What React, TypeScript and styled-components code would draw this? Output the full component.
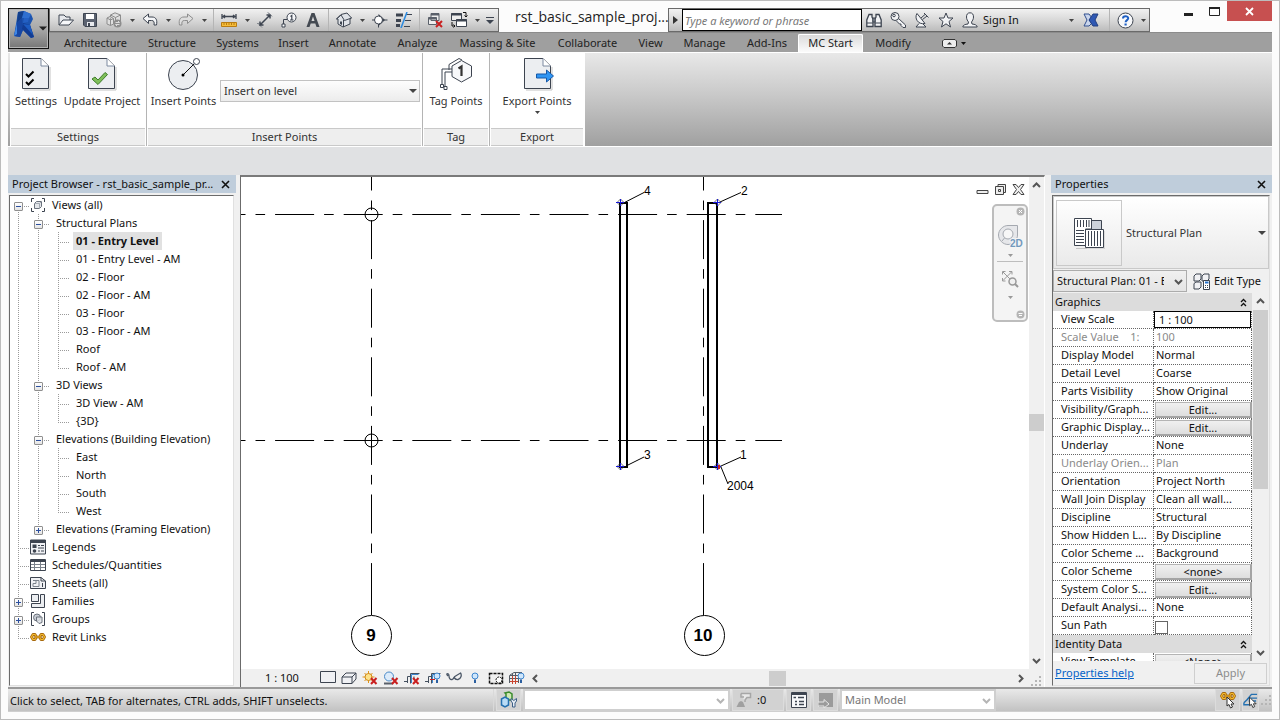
import React from "react";
import styled, { createGlobalStyle, css } from "styled-components";

const UI_FONT = '"Noto Sans", "Open Sans", "Liberation Sans", sans-serif';

const GlobalStyle = createGlobalStyle`
  *, *::before, *::after { box-sizing: border-box; }
  body { margin: 0; background: #fcfcfc; color: #111; font: 11px/18px ${UI_FONT}; }
  button, input, select { font: inherit; color: inherit; margin: 0; padding: 0; border: 0; background: none; border-radius: 0; }
  button { cursor: default; }
  ul { list-style: none; margin: 0; padding: 0; }
`;

/* ---------- shell ---------- */

const Window = styled.div`
  position: relative;
  display: flex;
  flex-direction: column;
  height: 100vh;
  min-height: 480px;
  padding: 0 7px 7px;
  border: 1px solid #bcbcbc;
  background: #fcfcfc;
`;

const TitleBar = styled.header`
  display: flex;
  flex: none;
  height: 31px;
  padding-left: 41px;
`;

const AppButton = styled.button`
  position: absolute;
  left: 7px;
  top: 7px;
  width: 41px;
  height: 41px;
  display: flex;
  align-items: center;
  border: 1px solid #111;
  background: linear-gradient(#c4c4c4, #a9a9a9 50%, #777);
  box-shadow: inset 0 0 0 1px #b5b5b5;
`;

const barSurface = css`
  display: flex;
  align-items: center;
  height: 24px;
  margin-top: 7px;
  border: 1px solid #6a6a6a;
  background: linear-gradient(#f1f1f1, #d6d6d6 55%, #bcbcbc);
`;

const QuickAccess = styled.div`
  ${barSurface}
  flex: none;
  width: 450px;
  padding-left: 4px;
`;

const ToolButton = styled.button<{ $w?: number }>`
  flex: none;
  display: flex;
  align-items: center;
  justify-content: center;
  width: ${(p) => p.$w ?? 24}px;
  height: 22px;
`;

const BarDivider = styled.span`
  flex: none;
  width: 7px;
  height: 22px;
  border-left: 3px solid transparent;
  background: linear-gradient(#b5b5b5, #b5b5b5) 0 0 / 1px 100% no-repeat content-box;
`;

const DocTitle = styled.h1`
  flex: 1;
  min-width: 0;
  margin: 0;
  padding-left: 16px;
  overflow: hidden;
  white-space: nowrap;
  font: 400 14px/32px "Open Sans", "Noto Sans", sans-serif;
  color: #222;
`;

const InfoCenter = styled.div`
  ${barSurface}
  flex: none;
  width: 482px;
`;

const SearchBox = styled.input`
  width: 180px;
  height: 22px;
  padding: 0 2px;
  border: 1px solid #000;
  background: #fff;
  font-style: italic;
  &::placeholder { color: #777; opacity: 1; }
`;

const SignIn = styled.button`
  flex: 1;
  display: flex;
  align-items: center;
  justify-content: space-between;
  height: 22px;
  padding: 0 2px 0 1px;
`;

const WindowButtons = styled.div`
  flex: none;
  display: flex;
  align-items: flex-start;
  width: 122px;
  padding-left: 25px;
`;

const WindowButton = styled.button<{ $close?: boolean }>`
  display: flex;
  align-items: center;
  justify-content: center;
  width: ${(p) => (p.$close ? 45 : 26)}px;
  height: 20px;
  background: ${(p) => (p.$close ? "#c75050" : "none")};
`;

/* ---------- ribbon ---------- */

const TabStrip = styled.nav`
  flex: none;
  display: flex;
  align-items: flex-end;
  height: 20px;
  padding-left: 45px;
  background: #9f9f9f;
  border-top: 1px solid #8c8c8c;
`;

const Tab = styled.button<{ $w: number; $active?: boolean }>`
  flex: none;
  width: ${(p) => p.$w}px;
  height: 18px;
  line-height: 16px;
  text-align: center;
  white-space: nowrap;
  color: #222;
  ${(p) =>
    p.$active &&
    css`
      background: linear-gradient(#d9d9d9, #fbfbfb);
      box-shadow: inset 0 1px #fff, inset 1px 0 #fff, inset -1px 0 #fff;
      border-radius: 2px 2px 0 0;
    `}
`;

const TabExtras = styled.button`
  display: flex;
  align-items: center;
  gap: 4px;
  height: 18px;
  margin-left: 19px;
`;

const Ribbon = styled.section`
  flex: none;
  display: flex;
  height: 94px;
  padding-left: 2px;
  border-top: 1px solid #fff;
  background: linear-gradient(#e8e8e8, #c9c9c9 45%, #a0a0a0);
`;

const RibbonPanel = styled.section<{ $w: number }>`
  flex: none;
  display: flex;
  flex-direction: column;
  width: ${(p) => p.$w}px;
  border-right: 1px solid #b4b4b4;
  box-shadow: inset 1px 0 #fff, inset -1px 0 #fff;
  background: #fff;
  &:last-child { border-right-color: transparent; }
`;

const PanelBody = styled.div`
  flex: 1;
  display: flex;
  justify-content: center;
  align-items: flex-start;
  gap: 2px;
  padding-top: 4px;
  white-space: nowrap;
`;

const PanelTitle = styled.h2`
  margin: 0 1px;
  height: 18px;
  border-top: 1px solid #c9c9c9;
  border-bottom: 1px solid #c9c9c9;
  background: #eee;
  font-size: 11px;
  font-weight: 400;
  line-height: 16px;
  text-align: center;
  color: #333;
`;

const BigButton = styled.button<{ $w: number }>`
  display: flex;
  flex-direction: column;
  align-items: center;
  width: ${(p) => p.$w}px;
  color: #333;
  line-height: 18px;
  & > svg:last-child:not(:first-child) { margin-top: 1px; }
`;

const LevelPicker = styled.label`
  position: relative;
  width: 200px;
  height: 22px;
  margin-top: 23px;
  display: flex;
  align-items: center;
  border: 1px solid #c2c2c2;
  background: linear-gradient(#fdfdfd, #ececec);
  select { appearance: none; width: 100%; height: 20px; padding-left: 3px; color: #333; }
  svg { position: absolute; right: 2px; pointer-events: none; }
`;

const OptionsBar = styled.div`
  flex: none;
  height: 29px;
  border-top: 1px solid #fff;
  background: #e0e1e3;
`;

/* ---------- workspace ---------- */

const Workspace = styled.main`
  flex: 1;
  display: flex;
  gap: 4px;
  min-height: 0;
  background: #f0f0f0;
`;

const Dock = styled.aside<{ $w: number }>`
  flex: none;
  display: flex;
  flex-direction: column;
  width: ${(p) => p.$w}px;
  min-height: 0;
`;

const DockTitle = styled.header`
  flex: none;
  display: flex;
  justify-content: space-between;
  align-items: center;
  height: 18px;
  padding: 0 6px 0 4px;
  background: #bfcddb;
  white-space: nowrap;
  h2 { margin: 0; font-size: 11px; font-weight: 400; line-height: 18px; }
  button { display: flex; }
`;

const TreeBox = styled.div`
  flex: 1;
  min-height: 0;
  margin: 2px 2px 1px 1px;
  overflow: hidden;
  border: 1px solid #e0e0e0;
  border-top-color: #6b6b6b;
  border-left-color: #6b6b6b;
  background: #fff;
`;

const TreeRow = styled.li`
  display: flex;
  align-items: center;
  height: 18px;
  white-space: nowrap;
  & > svg { margin-right: 3px; }
`;

const vDots = "repeating-linear-gradient(to bottom, #9a9a9a 0 1px, transparent 1px 2px)";
const hDots = "repeating-linear-gradient(to right, #9a9a9a 0 1px, transparent 1px 2px)";

const guideFill = {
  line: `${vDots} 8px 0 / 1px 100% no-repeat`,
  tee: `${vDots} 8px 0 / 1px 100% no-repeat, ${hDots} 8px 10px / 14px 1px no-repeat`,
  end: `${vDots} 8px 0 / 1px 11px no-repeat, ${hDots} 8px 10px / 14px 1px no-repeat`,
  start: `${vDots} 8px 10px / 1px 8px no-repeat, ${hDots} 8px 10px / 14px 1px no-repeat`,
};

const Guide = styled.span<{ $kind: keyof typeof guideFill }>`
  flex: none;
  display: flex;
  width: 20px;
  height: 18px;
  padding: 6px 0 0 4px;
  background: ${(p) => guideFill[p.$kind]};
`;

const Expander = styled.button`
  display: flex;
  width: 9px;
  height: 9px;
  border: 1px solid #8f8f8f;
  border-radius: 1px;
  background: linear-gradient(#fff, #e4e4e4);
`;

const TreeLabel = styled.span<{ $selected?: boolean; $indent?: boolean }>`
  padding: 0 3px;
  margin-left: ${(p) => (p.$indent ? 3 : 0)}px;
  font-weight: ${(p) => (p.$selected ? 700 : 400)};
  background: ${(p) => (p.$selected ? "#e1e1e1" : "none")};
`;

/* ---------- canvas ---------- */

const CanvasFrame = styled.section`
  flex: 1;
  display: grid;
  grid-template-columns: minmax(0, 1fr) 15px;
  grid-template-rows: minmax(0, 1fr) 18px;
  min-width: 0;
  margin-right: 2px;
  border-top: 2px solid #7a7a7a;
  border-left: 1px solid #6b6b6b;
  border-right: 1px solid #fff;
`;

const Sheet = styled.div`
  position: relative;
  overflow: hidden;
  background: #fff;
  & > svg { display: block; width: 100%; height: 100%; }
`;

const ViewButtons = styled.div`
  position: absolute;
  top: 6px;
  right: 4px;
  display: flex;
  gap: 5px;
  button { display: flex; }
`;

const NavBar = styled.div`
  position: absolute;
  top: 27px;
  right: 1px;
  display: flex;
  flex-direction: column;
  align-items: center;
  width: 36px;
  height: 118px;
  border: 2px solid #bdbdbd;
  border-radius: 5px;
  background: #f4f4f4;
  button { display: flex; }
  hr { width: 26px; margin: 4px 0 8px; border: 0; border-top: 1px solid #bdbdbd; }
`;

const NavCorner = styled.button`
  align-self: flex-end;
  margin: 1px 1px 4px;
  &:last-child { margin: auto 1px 1px; }
`;

const NavTool = styled.button<{ $gap: number }>`
  flex: none;
  flex-direction: column;
  align-items: center;
  gap: ${(p) => p.$gap}px;
`;

const VScroll = styled.div`
  display: flex;
  flex-direction: column;
  align-items: center;
  background: #f0f0f0;
`;

const ScrollButton = styled.button`
  flex: none;
  display: flex;
  align-items: center;
  justify-content: center;
  width: 17px;
  height: 17px;
`;

const Thumb = styled.div<{ $w: number; $h: number }>`
  width: ${(p) => p.$w}px;
  height: ${(p) => p.$h}px;
  background: #cdcdcd;
`;

const Track = styled.div<{ $grow: number }>`
  flex: ${(p) => p.$grow};
`;

const ViewControls = styled.div`
  display: flex;
  align-items: center;
  background: #f0f0f0;
`;

const ScaleButton = styled.button`
  flex: none;
  width: 76px;
  padding-left: 24px;
  text-align: left;
  line-height: 16px;
`;

const ControlButton = styled.button`
  flex: none;
  display: flex;
  justify-content: center;
  width: 21px;
`;

/* ---------- properties ---------- */

const PropsBox = styled.div`
  flex: 1;
  display: flex;
  flex-direction: column;
  min-height: 0;
  margin: 2px 2px 1px 1px;
  border: 1px solid #e0e0e0;
  border-top-color: #6b6b6b;
  border-left-color: #6b6b6b;
`;

const TypeSelector = styled.button`
  flex: none;
  display: flex;
  align-items: center;
  height: 73px;
  padding: 0 2px;
  border: 1px solid #c9c9c9;
  background: linear-gradient(#fff, #e9e9e9);
  color: #333;
  text-align: left;
  span { flex: 1; padding-left: 4px; }
`;

const TypePreview = styled.i`
  display: flex;
  align-items: center;
  justify-content: center;
  width: 66px;
  height: 66px;
  border: 1px solid #c9c9c9;
`;

const FilterRow = styled.div`
  flex: none;
  display: flex;
  align-items: center;
  height: 24px;
`;

const Select = styled.label<{ $w: number; $disabled?: boolean }>`
  position: relative;
  display: flex;
  align-items: center;
  flex: none;
  width: ${(p) => p.$w}px;
  height: 22px;
  border: ${(p) => (p.$disabled ? "2px solid #cfcfcf" : "1px solid #acacac")};
  background: ${(p) => (p.$disabled ? "#fff" : "linear-gradient(#f0f0f0, #e4e4e4)")};
  color: ${(p) => (p.$disabled ? "#777" : "#111")};
  select { appearance: none; width: 100%; height: 18px; padding: 0 22px 0 3px; opacity: 1; color: inherit; }
  svg { position: absolute; right: 3px; pointer-events: none; }
`;

const EditType = styled.button`
  flex: 1;
  display: flex;
  align-items: center;
  gap: 4px;
  padding-left: 6px;
  white-space: nowrap;
  line-height: 16px;
`;

const GridArea = styled.div`
  flex: 1;
  display: flex;
  min-height: 0;
`;

const GridClip = styled.div`
  flex: 1;
  min-width: 0;
  overflow: hidden;
  background: #fff;
`;

const PropTable = styled.table`
  width: 100%;
  table-layout: fixed;
  border-collapse: separate;
  border-spacing: 0;
`;

const GroupCell = styled.th`
  height: 18px;
  padding: 0 5px 0 2px;
  background: #dcdcdc;
  font-weight: 400;
  text-align: left;
  line-height: 18px;
  div { display: flex; justify-content: space-between; align-items: center; }
`;

const NameCell = styled.th<{ $dim?: boolean }>`
  height: 18px;
  padding: 0 0 1px 8px;
  border-right: 1px dotted #666;
  border-bottom: 1px dotted #666;
  font-weight: 400;
  text-align: left;
  white-space: pre;
  line-height: 16px;
  overflow: hidden;
  color: ${(p) => (p.$dim ? "#8a8a8a" : "#111")};
`;

const ValueCell = styled.td<{ $dim?: boolean; $flush?: boolean }>`
  height: 18px;
  padding: ${(p) => (p.$flush ? "0" : "0 0 1px 2px")};
  border-right: 1px dotted #666;
  border-bottom: 1px dotted #666;
  white-space: nowrap;
  line-height: 16px;
  color: ${(p) => (p.$dim ? "#8a8a8a" : "#111")};
`;

const ScaleInput = styled.input`
  display: block;
  width: 100%;
  height: 17px;
  padding: 0 0 1px 4px;
  border: 1px solid #000;
`;

const CellButton = styled.button`
  display: block;
  width: 97px;
  height: 16px;
  margin-left: 1px;
  border: 1px solid #b4b4b4;
  border-bottom: 2px solid #a4a4a4;
  border-right: 2px solid #a4a4a4;
  background: linear-gradient(#f0f0f0, #dedede);
  line-height: 14px;
`;

const Tick = styled.input`
  appearance: none;
  display: block;
  width: 13px;
  height: 13px;
  margin: 3px 0 0 1px;
  border: 1px solid #666;
  background: #fff;
`;

const HelpRow = styled.footer`
  flex: none;
  display: flex;
  justify-content: space-between;
  align-items: center;
  height: 24px;
  padding: 0 2px;
  a { color: #0563c8; }
`;

const ApplyButton = styled.button`
  width: 73px;
  height: 21px;
  border: 1px solid #cfcfcf;
  color: #8c8c8c;
`;

/* ---------- status bar ---------- */

const StatusBar = styled.footer`
  flex: none;
  display: flex;
  align-items: center;
  gap: 2px;
  height: 25px;
  border-top: 2px solid #9a9a9a;
  border-bottom: 1px solid #cfcfcf;
  background: linear-gradient(#e9e9e9, #c2c2c2);
`;

const StatusText = styled.span`
  flex: none;
  width: 486px;
  height: 22px;
  padding-left: 2px;
  border-right: 1px solid #d9d9d9;
  line-height: 24px;
  white-space: nowrap;
`;

const StatusButton = styled.button<{ $w?: number; $start?: boolean }>`
  flex: none;
  display: flex;
  align-items: center;
  justify-content: ${(p) => (p.$start ? "flex-start" : "center")};
  gap: 5px;
  width: ${(p) => p.$w ?? 25}px;
  height: 22px;
  padding-left: ${(p) => (p.$start ? 3 : 0)}px;
  border: 1px solid #dcdcdc;
  background: #d2d2d2;
`;

const StatusSpacer = styled.span`
  flex: 1;
`;

/* ---------- small drawings ---------- */

const Svg = ({ w = 16, h = 16, children }: { w?: number; h?: number; children: React.ReactNode }) => (
  <svg width={w} height={h} viewBox={`0 0 ${w} ${h}`} fill="none" aria-hidden="true">
    {children}
  </svg>
);

const Caret = ({ w = 5, h = 3, color = "#444" }: { w?: number; h?: number; color?: string }) => (
  <Svg w={w} h={h}>
    <path d={`M0 0H${w}L${w / 2} ${h}Z`} fill={color} />
  </Svg>
);

const Chevron = ({ dir, color = "#555" }: { dir: "up" | "down" | "left" | "right"; color?: string }) => {
  const turn = { up: 0, right: 90, down: 180, left: 270 }[dir];
  return (
    <Svg w={9} h={9}>
      <path d="M1 6 4.500 2.500 8 6" stroke={color} strokeWidth="2" transform={`rotate(${turn} 4.500 4.500)`} />
    </Svg>
  );
};

const Cross = () => (
  <Svg w={9} h={9}>
    <path d="M1 1 8 8M8 1 1 8" stroke="#111" strokeWidth="1.600" />
  </Svg>
);

const ink = "#3d4450";

const RevitLogo = () => (
  <Svg w={39} h={39}>
    <path d="M9 3 15 2 22 5 24 10 21 16 25 28 22 29 14 21 11 28 5 27Z" fill="#1c54b0" />
    <path d="M9 3 15 2 13 9 8 14Z" fill="#123f8c" />
    <path d="M15 2 22 5 20 9 13 9Z" fill="#2f6fd0" />
    <path d="M8 14 13 9 14 21 11 28 5 27Z" fill="#1747a4" />
    <path d="M8 14 5 27 8 25Z" fill="#3f86e6" />
    <path d="M14 14 21 16 25 28 22 29 13 20Z" fill="#123c93" />
    <path d="M14 15 21 16 24 26Z" fill="#1d5cc2" />
    <path d="M15 9 20 9 19 13 14 14Z" fill="#2460c4" />
    <path d="M30 17.500H38L34 21.500Z" fill="#222" />
  </Svg>
);

const OpenIcon = () => (
  <Svg>
    <path d="M1 13V3H6L8 5H12V8" stroke={ink} fill="#e6e8ec" />
    <path d="M1 13 5 8H15.500L11 13Z" stroke={ink} fill="#f7f8fa" />
  </Svg>
);
const SaveIcon = () => (
  <Svg>
    <path d="M1.500 1.500H14.500V14.500H3L1.500 13Z" fill="#5b6270" stroke={ink} />
    <path d="M4 2H12V7H4Z" fill="#fff" />
    <path d="M5 10H12V14H5Z" fill="#e8eaee" />
    <path d="M6 11H8V14H6Z" fill={ink} />
  </Svg>
);
const SyncIcon = () => (
  <Svg>
    <path d="M4.500 3 9 .8 14.500 3V9L9 12 4.500 9ZM4.500 3 9.500 5.500 14.500 3M9.500 5.500V12" stroke="#8d8d8d" fill="#dedede" />
    <path d="M1 6 4 4.500 7.500 6.500V12L4.500 13.500 1 12ZM1 6 4.500 8 7.500 6.500M4.500 8V13.500" stroke="#8d8d8d" fill="#dedede" />
    <circle cx="11.500" cy="11.500" r="4" fill="#8d8d8d" />
    <path d="M9.500 10.500H13.500L12 9M13.500 12.500H9.500L11 14" stroke="#dcdcdc" />
  </Svg>
);
const UndoIcon = () => (
  <Svg>
    <path d="M1 6.500 6.500 2V5H10C14 5 15.500 8 14.500 13H12C12.500 10 12 8.500 9.500 8.500H6.500V11.500Z" stroke={ink} fill="#f5f6f8" />
  </Svg>
);
const RedoIcon = () => (
  <Svg>
    <path d="M15 6.500 9.500 2V5H6C2 5 .5 8 1.500 13H4C3.500 10 4 8.500 6.500 8.500H9.500V11.500Z" stroke="#8d8d8d" fill="#dedede" />
  </Svg>
);
const MeasureIcon = () => (
  <Svg>
    <path d="M1 2V7M15 2V7M2 4.500H14M4 3 2 4.500 4 6M12 3 14 4.500 12 6" stroke={ink} strokeWidth="1.300" />
    <path d="M.5 10.500H15.500V14.500H.5Z" fill="#f6bd3a" stroke="#b97c12" />
    <path d="M3 11V13M5.500 11V13M8 11V13M10.500 11V13M13 11V13" stroke="#b97c12" />
  </Svg>
);
const DimensionIcon = () => (
  <Svg>
    <path d="M3 13 13 3M3 9.500V13H6.500M9.500 3H13V6.500" stroke={ink} strokeWidth="1.500" />
    <path d="M.5 11 5 15.500M11 .5 15.500 5" stroke={ink} strokeDasharray="2 1" />
  </Svg>
);
const TagIcon = () => (
  <Svg>
    <circle cx="10.500" cy="5.500" r="4.500" stroke={ink} fill="#f5f6f8" />
    <path d="M9.500 4.500 10.800 3.500V8M9 8H12.500" stroke={ink} strokeWidth="1.200" />
    <path d="M6 7.500H2.500V12" stroke={ink} />
    <path d="M1 12H4V15H1Z" stroke={ink} fill="#fff" />
  </Svg>
);
const TextIcon = () => (
  <Svg>
    <path d="M1.500 15 6.500 1H9.500L14.500 15H11.500L10.300 11.500H5.700L4.500 15ZM6.500 9H9.500L8 4.500Z" fill="#444a52" fillRule="evenodd" />
  </Svg>
);
const HouseIcon = () => (
  <Svg>
    <path d="M.5 7 5 2.500 11 1 15.500 6 14 7V12L7 15 2 12V7Z" stroke={ink} fill="#dfe2e7" />
    <path d="M.5 7 5 3 8.500 8.500 15.500 6M7.500 8V15" stroke={ink} />
    <path d="M4 9.500H6V13L4 12Z" fill={ink} />
  </Svg>
);
const SectionIcon = () => (
  <Svg>
    <path d="M6.500 2 13 8 6.500 14Z" fill={ink} />
    <circle cx="6.500" cy="8" r="4" stroke={ink} fill="#fff" />
    <path d="M12 8H15.500M0 8H2.500M6.500 12V15.500" stroke={ink} />
  </Svg>
);
const ThinLinesIcon = () => (
  <Svg w={18}>
    <path d="M1 3H8M1 8.500H6M1 13.500H5" stroke={ink} strokeWidth="3" />
    <path d="M11 2.500H17M10 8.500H16M9 14.500H15" stroke={ink} />
    <path d="M12 0 6 16" stroke="#2b8ae0" strokeWidth="1.500" />
  </Svg>
);
const CloseHiddenIcon = () => (
  <Svg>
    <path d="M4 1.500H12V8.500H4ZM1.500 5.500H9.500V12.500H1.500Z" stroke="#5a606a" fill="#eee" />
    <path d="M4 2.500H12M1.500 6.500H9.500" stroke="#5a606a" strokeWidth="2" />
    <path d="M9 9 15 15M15 9 9 15" stroke="#c91f1f" strokeWidth="2" />
  </Svg>
);
const SwitchIcon = () => (
  <Svg w={18} h={18}>
    <path d="M1.500 2.500H11.500V9.500H1.500Z" fill="#eee" stroke={ink} />
    <path d="M6.500 8.500H16.500V15.500H6.500Z" fill="#fff" stroke={ink} />
    <path d="M1 3.500H12M6 9.500H17" stroke={ink} strokeWidth="2" />
    <path d="M13 1.500H16V6M14.500 4.500 16 6 17.500 4.500M2 11V15H5M3.500 13.500 5 15 3.500 16.500" stroke="#111" />
  </Svg>
);
const CustomizeIcon = () => (
  <Svg w={8} h={7}>
    <path d="M0 .5H8" stroke={ink} />
    <path d="M0 3H8L4 7Z" fill={ink} />
  </Svg>
);

const BinocularsIcon = () => (
  <Svg>
    <path d="M3 2.500H6V5L7 7V14.500H.8V8ZM13 2.500H10V5L9 7V14.500H15.200V8Z" fill="#f2f3f5" stroke={ink} strokeWidth="1.300" />
    <path d="M7 6H9V10H7ZM1 11H7M9 11H15" fill="#9ca2ab" stroke={ink} />
  </Svg>
);
const KeyIcon = () => (
  <Svg w={17} h={17}>
    <path d="M8 6 15.500 13V15.500H13L11 13.500 11 12H9.500L6 8.500" fill="#f2f3f5" stroke={ink} />
    <circle cx="5" cy="4.500" r="4" fill="#f2f3f5" stroke={ink} />
    <circle cx="4" cy="3.500" r="1.300" stroke={ink} />
  </Svg>
);
const DishIcon = () => (
  <Svg>
    <path d="M5 11.500 2 15H12L9 12" fill="#f2f3f5" stroke={ink} />
    <path d="M3 1.500C0 6 4 13 11 11.500Z" fill="#f2f3f5" stroke={ink} />
    <path d="M7 6 11 2.500M8.500 7.500 13 4M10 1 14.500 5.500" stroke={ink} />
  </Svg>
);
const StarIcon = () => (
  <Svg>
    <path d="M8 1 10 6H15L11 9.500 12.500 15 8 11.800 3.500 15 5 9.500 1 6H6Z" fill="#f2f3f5" stroke={ink} />
  </Svg>
);
const UserIcon = () => (
  <Svg>
    <path d="M8 .8C5.500 .8 4.500 2.500 4.500 5S5.800 9 6.500 10L6 12C3 12.300 1 13 .8 15H15.200C15 13 13 12.300 10 12L9.500 10C10.200 9 11.500 7.500 11.500 5S10.500 .8 8 .8Z" fill="#f2f3f5" stroke={ink} />
  </Svg>
);
const ExchangeIcon = () => (
  <Svg>
    <path d="M1 2H6L9 6 6 8 9 11 6 14H1L4 8Z" fill="#c9d5ec" stroke="#32508f" />
    <path d="M15 2H10L6 8 10 14H15L12 8Z" fill="#2f58b3" stroke="#233f80" />
  </Svg>
);
const HelpIcon = () => (
  <Svg w={17} h={17}>
    <circle cx="8.500" cy="8.500" r="7.500" fill="#f7f8fa" stroke={ink} />
    <path d="M6 6.500C6 3.500 11.200 3.500 11.200 6.300 11.200 8 8.600 8.300 8.600 10.300" stroke="#1d5fc4" strokeWidth="2" />
    <path d="M7.500 11.500H9.700V13.500H7.500Z" fill="#1d5fc4" />
  </Svg>
);

const page = "M1.500 1.500H20L27.500 9V31.500H1.500Z";
const PageBase = () => (
  <>
    <path d="M3 33H29V10" stroke="#c4c4c4" />
    <path d={page} fill="#eceef1" stroke={ink} />
    <path d="M20 1.500V9H27.500" fill="#fff" stroke="#7c8aa0" />
  </>
);
const SettingsIcon = () => (
  <Svg w={30} h={35}>
    <PageBase />
    <path d="M5 17 7.500 19.500 12.500 14.500M5 25 7.500 27.500 12.500 22.500" stroke="#000" strokeWidth="2" />
  </Svg>
);
const UpdateIcon = () => (
  <Svg w={30} h={35}>
    <PageBase />
    <path d="M5 22 8 20 11 23 18 15.500 20.500 17.500 11 27.500Z" fill="#7fbf5a" stroke="#3f7d2c" />
  </Svg>
);
const InsertIcon = () => (
  <Svg w={34} h={35}>
    <circle cx="16" cy="18" r="14.500" fill="#eceef1" stroke={ink} />
    <circle cx="29.500" cy="4.500" r="3" fill="#fff" stroke={ink} />
    <path d="M16 18 27 7" stroke="#111" />
    <circle cx="16" cy="18" r="1.500" fill="#000" />
  </Svg>
);
const TagPointsIcon = () => (
  <Svg w={34} h={35}>
    <path d="M10 13V7.500L20 1.500 23 3" stroke={ink} />
    <path d="M22.500 3.500 32.500 9V19.500L22.500 25 13 19.500V9Z" fill="#f7f8fa" stroke={ink} />
    <path d="M19.500 11.500 22.500 9.500V19" stroke="#333" strokeWidth="2.200" />
    <path d="M13 12H3V28M13 15H6V30" stroke={ink} />
    <path d="M1.500 27.500H4.500V30.500H1.500ZM5 29.500H8V32.500H5Z" stroke={ink} fill="#fff" />
  </Svg>
);
const ExportIcon = () => (
  <Svg w={34} h={35}>
    <g transform="translate(3 0)">
      <PageBase />
    </g>
    <path d="M16.500 17H26.500V13L33.500 19 26.500 25V21H16.500Z" fill="#2f95f3" stroke="#1558a8" />
  </Svg>
);

const ViewsIcon = () => (
  <Svg>
    <path d="M1.500 5V1.500H4M12 1.500H14.500V5M14.500 11V14.500H12M4 14.500H1.500V11" stroke={ink} />
    <path d="M4.500 6.500 6.500 4.500H11.500V9.500L9.500 11.500H4.500Z" fill="#e3e6ea" stroke="#6b727d" />
    <path d="M4.500 6.500H9.500V11.500M9.500 6.500 11.500 4.500" stroke="#a5abb4" />
  </Svg>
);
const LegendIcon = () => (
  <Svg>
    <path d="M.5 1H15.500V15H.5Z" fill="#f0f1f4" stroke={ink} />
    <path d="M1 2.500H15" stroke={ink} strokeWidth="3" />
    <path d="M2.500 5.500H6.500V9H2.500Z" fill={ink} />
    <circle cx="4.500" cy="12" r="1.800" fill={ink} />
    <path d="M8 6.500H10M11 6.500H14M8 9H14M8 12H10M11 12H14" stroke={ink} />
  </Svg>
);
const ScheduleIcon = () => (
  <Svg>
    <path d="M.5 2.500H15.500V13.500H.5Z" fill="#fff" stroke={ink} />
    <path d="M1 4H15" stroke={ink} strokeWidth="2" />
    <path d="M1 7.500H15M1 10.500H15M4.500 5V13M10.500 5V13" stroke="#7b828c" />
  </Svg>
);
const SheetIcon = () => (
  <Svg>
    <path d="M.5 2.500H11L15.500 6V13.500H.5Z" fill="#f0f1f4" stroke={ink} />
    <path d="M11 2.500V6H15.500M12.500 8V12" stroke={ink} />
    <path d="M3 5.500H9V11.500H3V8.500H6V5.500" stroke="#7b828c" />
  </Svg>
);
const FamilyIcon = () => (
  <Svg>
    <path d="M1.500 1.500H8.500V8.500H1.500ZM10.500 1.500H14.500V14.500H1.500V10.500H10.500Z" fill="#eceef1" stroke={ink} />
  </Svg>
);
const GroupIcon = () => (
  <Svg>
    <path d="M4 1.500H1.500V14.500H4M12 1.500H14.500V14.500H12" stroke={ink} />
    <circle cx="7" cy="6.500" r="3.500" fill="#c8cdd5" stroke="#6b727d" />
    <path d="M6.500 6H12V11.500L9 12.500 6.500 10Z" fill="#dfe2e7" fillOpacity="0.800" stroke="#6b727d" />
  </Svg>
);
const chainRings = "M3 5.500H5L6.500 8 5 10.500H3L1.500 8ZM11 5.500H13L14.500 8 13 10.500H11L9.500 8Z";
const Chain = () => (
  <g strokeLinejoin="round">
    <path d={chainRings} stroke="#a8690c" strokeWidth="2.800" />
    <path d={chainRings} stroke="#f5bc2f" strokeWidth="1.200" />
    <path d="M4.500 8H11.500" stroke="#a8690c" strokeWidth="2.400" />
    <path d="M5 8H11" stroke="#f5bc2f" />
  </g>
);
const LinkIcon = () => (
  <Svg>
    <Chain />
  </Svg>
);

const PlanIcon = () => (
  <Svg w={32} h={32}>
    <path d="M3 31.500H14M14 32H32V14" stroke="#c4c4c4" />
    <path d="M10 3.500H28.500V16H10Z" fill="#cdd2da" stroke={ink} />
    <path d="M1.500 1.500H18.500V12H12.500V28.500H1.500Z" fill="#fff" stroke={ink} />
    <path d="M4.500 3V10M7.500 3V10M10.500 3V10M13.500 3V10M16 3V10" stroke={ink} />
    <path d="M3 13.500H11M3 16.500H11M3 19.500H11M3 22.500H11M3 25.500H11" stroke={ink} />
    <path d="M12.500 12.500H30.500V30.500H12.500Z" fill="#fff" stroke={ink} />
    <path d="M15.500 14V29M18.500 14V29M21.500 14V29M24.500 14V29M27.500 14V29" stroke={ink} />
  </Svg>
);
const EditTypeIcon = () => (
  <Svg w={17} h={17}>
    <path d="M1 3 3 1H8V6L6 8H1ZM9 3 11 1H16V6L14 8H9ZM1 10.500 3 9H8V14L6 16H1Z" fill="#f0f1f4" stroke={ink} />
    <path d="M10.500 7.500H16.500V16.500H10.500Z" fill="#fff" stroke={ink} />
    <path d="M12 9.500H15.500" stroke="#2470c9" strokeWidth="2" />
    <path d="M12 12.500H15.500M12 14.500H15.500" stroke={ink} strokeDasharray="1 1" />
  </Svg>
);
const CollapseIcon = () => (
  <Svg w={7} h={9}>
    <path d="M1 4 3.500 1.500 6 4M1 8 3.500 5.500 6 8" stroke="#111" strokeWidth="1.300" />
  </Svg>
);

const redX = <path d="M9 8 14.500 14M14.500 8 9 14" stroke="#c91f1f" strokeWidth="2" />;
const bulb = (
  <>
    <circle cx="12" cy="6" r="3" fill="#cfe6fb" stroke="#3d86cf" />
    <path d="M11 9.500H13V13H11Z" fill="#2b5fa0" />
  </>
);
const DetailIcon = () => (
  <Svg>
    <path d="M.5 1.500H15.500V12.500H.5Z" fill="#f0f1f4" stroke={ink} />
  </Svg>
);
const StyleIcon = () => (
  <Svg>
    <path d="M1 7 5 3H15V9L11 13.500H1ZM1 7H11V13.500M11 7 15 3" fill="#f0f1f4" stroke={ink} />
  </Svg>
);
const SunIcon = () => (
  <Svg>
    <path d="M6.500 1V13M.5 7H12.500M2.500 3 10.500 11M10.500 3 2.500 11" stroke="#e0941a" />
    <circle cx="6.500" cy="7" r="3.500" fill="#fde28a" stroke="#d08a18" />
    {redX}
  </Svg>
);
const ShadowIcon = () => (
  <Svg>
    <path d="M1 13.500H10" stroke="#5a606a" strokeWidth="2" />
    <circle cx="6" cy="6.500" r="4.500" fill="#dcebfa" stroke="#4a8ac8" />
    {redX}
  </Svg>
);
const cropShape = (
  <>
    <path d="M0 11.500H3M3.500 13V6.500H6.500M6.500 13.500V3.500H15.500" stroke="#44505f" />
    <path d="M7.500 13V4.500H14.500" stroke="#3d86cf" />
    <path d="M10 6.500V9" stroke="#44505f" />
  </>
);
const CropIcon = () => (
  <Svg>
    {cropShape}
    {redX}
  </Svg>
);
const CropRegionIcon = () => (
  <Svg>
    {cropShape}
    <path d="M5 9.500H10" stroke="#c91f1f" />
    {bulb}
  </Svg>
);
const GlassesIcon = () => (
  <Svg>
    <path d="M.5 4C2 3 3 4 3 6S4 10 6 9.500 8 7 8 7M8 7 14.500 3C16 5 15 9 12 9.500S8.500 8 8 7M.5 4 2 6" stroke="#4a5666" strokeWidth="1.300" />
  </Svg>
);
const RevealIcon = () => (
  <Svg>
    <g transform="translate(-4 0)">{bulb}</g>
  </Svg>
);
const TempIcon = () => (
  <Svg>
    <path d="M1.500 3.500H14.500V13.500H1.500Z" stroke="#111" strokeDasharray="3 1" strokeWidth="1.500" />
    <circle cx="11" cy="10" r="3" fill="#fff" stroke="#111" strokeDasharray="2 1" />
  </Svg>
);
const ConstraintIcon = () => (
  <Svg>
    <path d="M1 5 5 2.500H13M.5 13V5.500H9.500V13M1 8.500H9M3.500 3.500V5M6.500 3V5M9 5 13 2.500" stroke="#555c66" />
    <path d="M3.500 6V14M6.500 6V14M1 11.500H9" stroke="#c9452f" />
    {bulb}
  </Svg>
);

const WorksetIcon = () => (
  <Svg w={18} h={18}>
    <path d="M5 2 9 1 12 3V9H6V3Z" fill="#cfe8b5" stroke="#3a8a2b" strokeWidth="1.500" />
    <path d="M1.500 8 5 6 8.500 8V14L5 16 1.500 14Z" fill="#b9dcf6" stroke="#2470b0" strokeWidth="1.500" />
    <path d="M11 7.500V10L12.500 12V16H15V12L16.500 10V7.500L13.800 9.500Z" fill="#e8eef5" stroke="#3c5f86" />
  </Svg>
);
const FilterIcon = () => (
  <Svg>
    <path d="M5 1.500H14.500V5.500H11L9 8V10M5 1.500V5H8" stroke="#a6a6a6" strokeWidth="1.500" fill="#e8e8e8" />
    <path d="M.5 15 3 10 5 9 7 10 9 15Z" fill="#a0a0a0" />
  </Svg>
);
const OptionsIcon = () => (
  <Svg>
    <path d="M.5 .5H15.500V15.500H.5Z" fill="#f7f8fa" stroke={ink} />
    <path d="M1 2H15" stroke={ink} strokeWidth="2" />
    <path d="M2.500 5.500H5M7 5.500H13M4 9.500H6M8 9.500H13M4 12.500H6M8 12.500H13" stroke={ink} strokeWidth="1.500" />
  </Svg>
);
const ExcludeIcon = () => (
  <Svg>
    <path d="M1 1H15V15H1Z" fill="#9b9b9b" />
    <path d="M0 10H6V7.500L11 12 6 16V14H0Z" fill="#9b9b9b" stroke="#e6e6e6" />
  </Svg>
);
const pointer = <path d="M7 5V14L9 12.500 10.500 16 12.500 15 11 12H14Z" fill="#fff" stroke="#333" />;
const SelectLinksIcon = () => (
  <Svg h={17}>
    <g transform="translate(0 -4)">
      <Chain />
    </g>
    {pointer}
  </Svg>
);
const SelectUnderlayIcon = () => (
  <Svg h={17}>
    <path d="M1 11 6 6H15M4 8 9 2H15M1 11 1 13H8M6 9H14" stroke="#2470b0" strokeWidth="1.500" />
    {pointer}
  </Svg>
);
const Grip = () => (
  <Svg w={11} h={11}>
    <path d="M8 0H10V2H8ZM8 4H10V6H8ZM4 4H6V6H4ZM8 8H10V10H8ZM4 8H6V10H4ZM0 8H2V10H0Z" fill="#b5b5b5" />
  </Svg>
);

/* ---------- drawing ---------- */

const Joint = ({ x, y }: { x: number; y: number }) => (
  <g stroke="#1818d8">
    <path d={`M${x - 3} ${y + 0.5}L${x + 0.5} ${y - 3}L${x + 4} ${y + 0.5}L${x + 0.5} ${y + 4}Z`} stroke="#333" strokeWidth="0.700" />
    <path d={`M${x - 4} ${y + 0.5}H${x + 4}M${x + 0.5} ${y - 3}V${y + 4}`} />
  </g>
);

const Drawing = () => (
  <svg role="img" aria-label="Structural plan drawing">
    <g transform="translate(-241 -177)" stroke="#000" fill="none">
      <g strokeDasharray="39 10 9.600 10">
        <path d="M206.500 214.500H782" />
        <path d="M206.500 440.500H782" />
        <path d="M371.500 151.500V590" />
        <path d="M703.500 151.500V590" />
      </g>
      <path d="M371.500 590V615M703.500 590V615" />
      <circle cx="371.500" cy="214.500" r="6.500" />
      <circle cx="371.500" cy="440.500" r="6.500" />
      <circle cx="371.500" cy="635.500" r="20" />
      <circle cx="704.500" cy="635.500" r="20" />
      <path d="M620 203H627V467H620ZM708 203H717V467H708Z" strokeWidth="2" />
      <path d="M624.500 202.500 644 192.500M720 202 741 192.500M626 466 644 457M721 466 741 457M721 467 728 484" />
      <Joint x={620} y={202} />
      <Joint x={717} y={202} />
      <Joint x={620} y={466} />
      <Joint x={717} y={466} />
      <path d="M719 465V469" stroke="#d02020" strokeWidth="2" />
      <g stroke="none" fill="#000" fontFamily='"Liberation Sans", sans-serif' fontSize="12">
        <text x="644" y="195">4</text>
        <text x="741" y="195">2</text>
        <text x="644" y="459">3</text>
        <text x="740" y="459">1</text>
        <text x="727" y="490">2004</text>
        <g fontSize="17" fontWeight="700" textAnchor="middle">
          <text x="371" y="641">9</text>
          <text x="703" y="641">10</text>
        </g>
      </g>
    </g>
  </svg>
);

/* ---------- data ---------- */

const tabs: [string, number][] = [
  ["Architecture", 85], ["Structure", 68], ["Systems", 63], ["Insert", 49], ["Annotate", 69],
  ["Analyze", 61], ["Massing & Site", 99], ["Collaborate", 81], ["View", 45], ["Manage", 63],
  ["Add-Ins", 62], ["MC Start", 65], ["Modify", 60],
];

type G = keyof typeof guideFill;
type TreeItem = { label: string; guides: G[]; open?: boolean; icon?: React.ReactNode; selected?: boolean };

const leaves = (labels: string[], selected?: string): TreeItem[] =>
  labels.map((label, i) => ({
    label,
    guides: ["line", "line", i === labels.length - 1 ? "end" : "tee"],
    selected: label === selected,
  }));

const tree: TreeItem[] = [
  { label: "Views (all)", guides: ["start"], open: true, icon: <ViewsIcon /> },
  { label: "Structural Plans", guides: ["line", "tee"], open: true },
  ...leaves(
    ["01 - Entry Level", "01 - Entry Level - AM", "02 - Floor", "02 - Floor - AM", "03 - Floor", "03 - Floor - AM", "Roof", "Roof - AM"],
    "01 - Entry Level",
  ),
  { label: "3D Views", guides: ["line", "tee"], open: true },
  ...leaves(["3D View - AM", "{3D}"]),
  { label: "Elevations (Building Elevation)", guides: ["line", "tee"], open: true },
  ...leaves(["East", "North", "South", "West"]),
  { label: "Elevations (Framing Elevation)", guides: ["line", "end"], open: false },
  { label: "Legends", guides: ["tee"], icon: <LegendIcon /> },
  { label: "Schedules/Quantities", guides: ["tee"], icon: <ScheduleIcon /> },
  { label: "Sheets (all)", guides: ["tee"], icon: <SheetIcon /> },
  { label: "Families", guides: ["tee"], open: false, icon: <FamilyIcon /> },
  { label: "Groups", guides: ["tee"], open: false, icon: <GroupIcon /> },
  { label: "Revit Links", guides: ["end"], icon: <LinkIcon /> },
];

type Prop = { name: string; value: string; kind?: "input" | "button" | "check" | "dim" };
const graphics: Prop[] = [
  { name: "View Scale", value: "1 : 100", kind: "input" },
  { name: "Scale Value    1:", value: "100", kind: "dim" },
  { name: "Display Model", value: "Normal" },
  { name: "Detail Level", value: "Coarse" },
  { name: "Parts Visibility", value: "Show Original" },
  { name: "Visibility/Graph...", value: "Edit...", kind: "button" },
  { name: "Graphic Display...", value: "Edit...", kind: "button" },
  { name: "Underlay", value: "None" },
  { name: "Underlay Orien...", value: "Plan", kind: "dim" },
  { name: "Orientation", value: "Project North" },
  { name: "Wall Join Display", value: "Clean all wall..." },
  { name: "Discipline", value: "Structural" },
  { name: "Show Hidden L...", value: "By Discipline" },
  { name: "Color Scheme ...", value: "Background" },
  { name: "Color Scheme", value: "<none>", kind: "button" },
  { name: "System Color S...", value: "Edit...", kind: "button" },
  { name: "Default Analysi...", value: "None" },
  { name: "Sun Path", value: "", kind: "check" },
];
const identity: Prop[] = [{ name: "View Template", value: "<None>", kind: "button" }];

const PropRow = ({ prop }: { prop: Prop }) => (
  <tr>
    <NameCell scope="row" $dim={prop.kind === "dim"}>{prop.name}</NameCell>
    <ValueCell $dim={prop.kind === "dim"} $flush={!!prop.kind && prop.kind !== "dim"}>
      {prop.kind === "input" && <ScaleInput aria-label={prop.name} defaultValue={prop.value} />}
      {prop.kind === "button" && <CellButton>{prop.value}</CellButton>}
      {prop.kind === "check" && <Tick type="checkbox" aria-label={prop.name} />}
      {(!prop.kind || prop.kind === "dim") && prop.value}
    </ValueCell>
  </tr>
);

const GroupRow = ({ title }: { title: string }) => (
  <tr>
    <GroupCell colSpan={2}>
      <div>{title}<CollapseIcon /></div>
    </GroupCell>
  </tr>
);

const Dropdown = () => (
  <ToolButton $w={12} aria-label="More"><Caret /></ToolButton>
);

export default function App() {
  return (
    <Window>
      <GlobalStyle />
      <TitleBar>
        <QuickAccess>
          <ToolButton aria-label="Open"><OpenIcon /></ToolButton>
          <ToolButton aria-label="Save"><SaveIcon /></ToolButton>
          <ToolButton aria-label="Synchronize"><SyncIcon /></ToolButton>
          <Dropdown />
          <ToolButton aria-label="Undo"><UndoIcon /></ToolButton>
          <Dropdown />
          <ToolButton aria-label="Redo"><RedoIcon /></ToolButton>
          <Dropdown />
          <BarDivider />
          <ToolButton aria-label="Measure"><MeasureIcon /></ToolButton>
          <Dropdown />
          <ToolButton aria-label="Aligned Dimension"><DimensionIcon /></ToolButton>
          <ToolButton aria-label="Tag by Category"><TagIcon /></ToolButton>
          <ToolButton aria-label="Text"><TextIcon /></ToolButton>
          <BarDivider />
          <ToolButton aria-label="Default 3D View"><HouseIcon /></ToolButton>
          <Dropdown />
          <ToolButton aria-label="Section"><SectionIcon /></ToolButton>
          <ToolButton aria-label="Thin Lines"><ThinLinesIcon /></ToolButton>
          <BarDivider />
          <ToolButton aria-label="Close Hidden Windows"><CloseHiddenIcon /></ToolButton>
          <ToolButton aria-label="Switch Windows"><SwitchIcon /></ToolButton>
          <Dropdown />
          <ToolButton $w={14} aria-label="Customize"><CustomizeIcon /></ToolButton>
        </QuickAccess>
        <DocTitle>rst_basic_sample_proj...</DocTitle>
        <InfoCenter>
          <ToolButton $w={13} aria-label="Collapse search">
            <Svg w={5} h={8}><path d="M0 0 5 4 0 8Z" fill="#333" /></Svg>
          </ToolButton>
          <SearchBox placeholder="Type a keyword or phrase" aria-label="Search" />
          <ToolButton aria-label="Find"><BinocularsIcon /></ToolButton>
          <ToolButton aria-label="Subscription"><KeyIcon /></ToolButton>
          <ToolButton aria-label="Communication"><DishIcon /></ToolButton>
          <ToolButton aria-label="Favorites"><StarIcon /></ToolButton>
          <ToolButton aria-label="Account"><UserIcon /></ToolButton>
          <SignIn>Sign In<Caret /></SignIn>
          <ToolButton $w={30} aria-label="Exchange Apps"><ExchangeIcon /></ToolButton>
          <BarDivider />
          <ToolButton aria-label="Help"><HelpIcon /></ToolButton>
          <Dropdown />
        </InfoCenter>
        <WindowButtons>
          <WindowButton aria-label="Minimize"><Svg w={9} h={9}><path d="M0 7.500H9" stroke="#222" strokeWidth="3" /></Svg></WindowButton>
          <WindowButton aria-label="Maximize"><Svg w={11} h={9}><path d="M.5 1V8.500H10.500V1" stroke="#222" /><path d="M0 1H11" stroke="#222" strokeWidth="2" /></Svg></WindowButton>
          <WindowButton $close aria-label="Close"><Svg w={9} h={9}><path d="M1 1 8 8M8 1 1 8" stroke="#fff" strokeWidth="1.800" /></Svg></WindowButton>
        </WindowButtons>
      </TitleBar>

      <TabStrip>
        {tabs.map(([name, w]) => (
          <Tab key={name} $w={w} $active={name === "MC Start"}>{name}</Tab>
        ))}
        <TabExtras aria-label="Minimize ribbon">
          <Svg w={15} h={9}>
            <path d="M2 .5H13L14.500 2V7L13 8.500H2L.5 7V2Z" fill="#eee" stroke="#333" />
            <path d="M5 5.500H10L7.500 3Z" fill="#333" />
          </Svg>
          <Caret color="#111" />
        </TabExtras>
      </TabStrip>
      <AppButton aria-label="Application menu"><RevitLogo /></AppButton>

      <Ribbon>
        <RibbonPanel $w={137}>
          <PanelBody>
            <BigButton $w={46}><SettingsIcon />Settings</BigButton>
            <BigButton $w={82}><UpdateIcon />Update Project</BigButton>
          </PanelBody>
          <PanelTitle>Settings</PanelTitle>
        </RibbonPanel>
        <RibbonPanel $w={276}>
          <PanelBody>
            <BigButton $w={69}><InsertIcon />Insert Points</BigButton>
            <LevelPicker>
              <select aria-label="Insert mode"><option>Insert on level</option></select>
              <Caret w={8} h={4} />
            </LevelPicker>
          </PanelBody>
          <PanelTitle>Insert Points</PanelTitle>
        </RibbonPanel>
        <RibbonPanel $w={67}>
          <PanelBody>
            <BigButton $w={60}><TagPointsIcon />Tag Points</BigButton>
          </PanelBody>
          <PanelTitle>Tag</PanelTitle>
        </RibbonPanel>
        <RibbonPanel $w={95}>
          <PanelBody>
            <BigButton $w={76}><ExportIcon />Export Points<Caret /></BigButton>
          </PanelBody>
          <PanelTitle>Export</PanelTitle>
        </RibbonPanel>
      </Ribbon>
      <OptionsBar />

      <Workspace>
        <Dock $w={228}>
          <DockTitle>
            <h2>Project Browser - rst_basic_sample_pr...</h2>
            <button aria-label="Close Project Browser"><Cross /></button>
          </DockTitle>
          <TreeBox>
            <ul>
              {tree.map((item) => (
                <TreeRow key={item.label}>
                  {item.guides.map((kind, i) => (
                    <Guide key={i} $kind={kind}>
                      {i === item.guides.length - 1 && item.open !== undefined && (
                        <Expander aria-label={`Toggle ${item.label}`}>
                          <Svg w={7} h={7}>
                            <path d={item.open ? "M1 3.500H6" : "M1 3.500H6M3.500 1V6"} stroke="#2c4f9e" />
                          </Svg>
                        </Expander>
                      )}
                    </Guide>
                  ))}
                  {item.icon}
                  <TreeLabel $selected={item.selected} $indent={!item.icon}>{item.label}</TreeLabel>
                </TreeRow>
              ))}
            </ul>
          </TreeBox>
        </Dock>

        <CanvasFrame>
          <Sheet>
            <Drawing />
            <ViewButtons>
              <button aria-label="Minimize view"><Svg w={13} h={13}><path d="M1 7.500H12V10.500H1Z" fill="#eee" stroke="#444" /></Svg></button>
              <button aria-label="Restore view"><Svg w={13} h={13}><path d="M4 3V1.500H11.500V9.500H10M1.500 3.500H9.500V11.500H1.500ZM4.500 6.500H6.500V8.500H4.500Z" fill="#eee" stroke="#444" /></Svg></button>
              <button aria-label="Close view"><Svg w={13} h={13}><path d="M1 1.500H4L6.500 4.500 9 1.500H12L8.500 6.500 12 11.500H9L6.500 8.500 4 11.500H1L4.500 6.500Z" fill="#eee" stroke="#444" /></Svg></button>
            </ViewButtons>
            <NavBar>
              <NavCorner aria-label="Close navigation bar"><Svg w={9} h={9}><circle cx="4.500" cy="4.500" r="4" fill="#b5b5b5" /><path d="M3 3 6 6M6 3 3 6" stroke="#fff" /></Svg></NavCorner>
              <NavTool $gap={4} aria-label="Steering wheel">
                <Svg w={26} h={30}>
                  <path d="M11 5.500H20.500V15C20.500 20 16 24.500 11 24.500S1.500 20 1.500 15 6 5.500 11 5.500Z" fill="#e6e7ea" stroke="#a5a9b0" />
                  <circle cx="11" cy="14" r="5" fill="#f7f7f7" stroke="#a5a9b0" />
                  <path d="M7.500 18 5 21M14.500 18 17 21" stroke="#a5a9b0" />
                  <text x="13" y="27" fontSize="10" fontWeight="700" fontFamily="Liberation Sans" fill="#7299bd" stroke="#f4f4f4" strokeWidth="2" paintOrder="stroke">2D</text>
                </Svg>
                <Caret color="#999" />
              </NavTool>
              <hr />
              <NavTool $gap={8} aria-label="Zoom">
                <Svg w={18} h={18}>
                  <path d="M1.500 4.500V1.500H4.500M8 1.500H11V4.500M1.500 8V11H4.500M2 2 10.500 10.500M10.500 2 2 10.500" stroke="#999" />
                  <circle cx="11.500" cy="11.500" r="3.500" fill="#f0f0f0" stroke="#999" strokeWidth="1.500" />
                  <path d="M14 14 17 17" stroke="#999" strokeWidth="2" />
                </Svg>
                <Caret color="#999" />
              </NavTool>
              <NavCorner aria-label="Customize navigation bar"><Svg w={9} h={9}><circle cx="4.500" cy="4.500" r="4" fill="#b5b5b5" /><path d="M2.500 3.500H6.500M3 5.500H6" stroke="#fff" /></Svg></NavCorner>
            </NavBar>
          </Sheet>
          <VScroll>
            <ScrollButton aria-label="Scroll up"><Chevron dir="up" /></ScrollButton>
            <Track $grow={219} />
            <Thumb $w={15} $h={17} />
            <Track $grow={221} />
            <ScrollButton aria-label="Scroll down"><Chevron dir="down" /></ScrollButton>
          </VScroll>
          <ViewControls>
            <ScaleButton>1 : 100</ScaleButton>
            {[DetailIcon, StyleIcon, SunIcon, ShadowIcon, CropIcon, CropRegionIcon, GlassesIcon, RevealIcon, TempIcon, ConstraintIcon].map((I, i) => (
              <ControlButton key={i} aria-label={`View control ${i + 1}`}><I /></ControlButton>
            ))}
            <ScrollButton aria-label="Scroll left"><Chevron dir="left" /></ScrollButton>
            <Track $grow={224} />
            <Thumb $w={17} $h={15} />
            <Track $grow={226} />
            <ScrollButton aria-label="Scroll right"><Chevron dir="right" /></ScrollButton>
          </ViewControls>
          <VScroll><Track $grow={1} /><Grip /></VScroll>
        </CanvasFrame>

        <Dock $w={221}>
          <DockTitle>
            <h2>Properties</h2>
            <button aria-label="Close Properties"><Cross /></button>
          </DockTitle>
          <PropsBox>
            <TypeSelector>
              <TypePreview><PlanIcon /></TypePreview>
              <span>Structural Plan</span>
              <Caret w={8} h={4} />
            </TypeSelector>
            <FilterRow>
              <Select $w={134}>
                <select aria-label="Element filter"><option>Structural Plan: 01 - Entry Level</option></select>
                <Chevron dir="down" />
              </Select>
              <EditType><EditTypeIcon />Edit Type</EditType>
            </FilterRow>
            <GridArea>
              <GridClip>
                <PropTable>
                  <colgroup><col width="101" /><col /></colgroup>
                  <tbody>
                    <GroupRow title="Graphics" />
                    {graphics.map((p) => <PropRow key={p.name} prop={p} />)}
                    <GroupRow title="Identity Data" />
                    {identity.map((p) => <PropRow key={p.name} prop={p} />)}
                  </tbody>
                </PropTable>
              </GridClip>
              <VScroll>
                <ScrollButton aria-label="Scroll up"><Chevron dir="up" /></ScrollButton>
                <Thumb $w={15} $h={179} />
                <Track $grow={1} />
                <ScrollButton aria-label="Scroll down"><Chevron dir="down" /></ScrollButton>
              </VScroll>
            </GridArea>
            <HelpRow>
              <a href="#help">Properties help</a>
              <ApplyButton disabled>Apply</ApplyButton>
            </HelpRow>
          </PropsBox>
        </Dock>
      </Workspace>

      <StatusBar>
        <StatusText>Click to select, TAB for alternates, CTRL adds, SHIFT unselects.</StatusText>
        <StatusButton aria-label="Worksets"><WorksetIcon /></StatusButton>
        <Select $w={207} $disabled>
          <select disabled aria-label="Active workset"><option></option></select>
          <Chevron dir="down" color="#b5b5b5" />
        </Select>
        <StatusButton $w={52} $start><FilterIcon />:0</StatusButton>
        <StatusButton aria-label="Design options"><OptionsIcon /></StatusButton>
        <StatusButton aria-label="Exclude options"><ExcludeIcon /></StatusButton>
        <Select $w={156} $disabled>
          <select disabled aria-label="Design option"><option>Main Model</option></select>
          <Chevron dir="down" color="#b5b5b5" />
        </Select>
        <StatusSpacer />
        <StatusButton aria-label="Select links"><SelectLinksIcon /></StatusButton>
        <StatusButton $w={17} aria-label="Select underlay elements"><SelectUnderlayIcon /></StatusButton>
        <Grip />
      </StatusBar>
    </Window>
  );
}
